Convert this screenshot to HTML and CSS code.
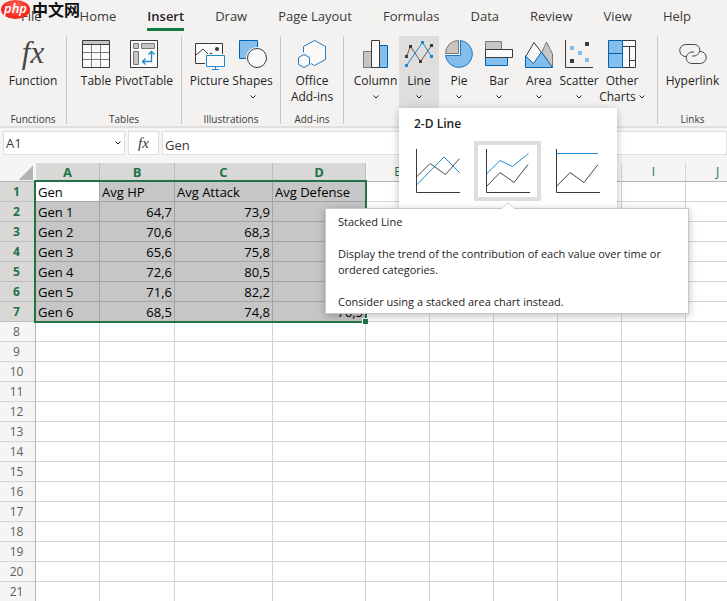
FILE: index.html
```
<!DOCTYPE html>
<html lang="en">
<head>
    <meta charset="UTF-8">
    <meta name="viewport" content="width=device-width, initial-scale=1.0">
    <title>Gen stats</title>
    <link rel="stylesheet" href="styles.css">
</head>
<body>
    <nav class="tabs">
        <a href="#file" class="file">File</a>
        <a href="#home">Home</a>
        <a href="#insert" class="active">Insert</a>
        <a href="#draw">Draw</a>
        <a href="#layout">Page Layout</a>
        <a href="#formulas">Formulas</a>
        <a href="#data">Data</a>
        <a href="#review">Review</a>
        <a href="#view">View</a>
        <a href="#help">Help</a>
    </nav>
    <div class="site-logo"><span class="logo-php">php</span><span class="logo-cn" lang="zh">中文网</span></div>

    <div class="ribbon">
        <section class="group group-functions">
            <div class="tools">
                <button class="tool"><span class="fx-big">fx</span>Function</button>
            </div>
            <div class="group-name">Functions</div>
        </section>

        <section class="group group-tables">
            <div class="tools">
                <button class="tool">
                    <svg class="icon" viewBox="0 0 28 28"><path d="M.5.5h27v27H.5z" fill="#fafafa"/><path d="M1 1h26v3H1z" fill="#c8c6c4"/><path d="M1 12.5h26M1 19.5h26M9.500 5v22M18.500 5v22" stroke="#797774"/><path d="M.5.5h27v27H.5zM.5 4.500h27" fill="none" stroke="#3b3a39"/></svg>
                    Table
                </button>
                <button class="tool pivot">
                    <svg class="icon" viewBox="0 0 28 28"><path d="M.5.5h27v27H.5z" fill="#fafafa" stroke="#3b3a39"/><path d="M3.500 3.500h5v5h-5zM11.500 3.500h13v5h-13zM3.500 11.500h5v13h-5z" fill="#c8c6c4" stroke="#797774"/><path d="M21.500 12v9.500H13M18.500 14.500l3-3 3 3M15.500 18.500l-3 3 3 3" fill="none" stroke="#1e8bcd" stroke-width="1.300"/></svg>
                    PivotTable
                </button>
            </div>
            <div class="group-name">Tables</div>
        </section>

        <section class="group group-illustrations">
            <div class="tools">
                <button class="tool">
                    <svg class="icon" viewBox="0 0 28 28"><path d="M-.5 3.500h27v20h-27z" fill="#fafafa" stroke="#3b3a39"/><circle cx="21" cy="9" r="2" fill="#3b3a39"/><path d="M0 15l7-6 5 5M11 16l4-3 4 3" fill="none" stroke="#3b3a39"/><path d="M9 14h21v14H9z" fill="#f3f2f1"/><path d="M10.500 15.500h18v11h-18z" fill="#fafafa" stroke="#1e8bcd"/><path d="M19.500 27v2.500M16 29.500h7" stroke="#1e8bcd"/></svg>
                    Picture
                </button>
                <button class="tool">
                    <svg class="icon" viewBox="0 0 28 28"><path d="M.5.5h18v18H.5z" fill="#83beec" stroke="#0063b1"/><circle cx="18" cy="18" r="11" fill="#f3f2f1"/><circle cx="18" cy="18" r="9.500" fill="#fafafa" stroke="#3b3a39"/></svg>
                    Shapes
                    <svg class="chevron" viewBox="0 0 6 4"><path d="M.5.5L3 3 5.500.5"/></svg>
                </button>
            </div>
            <div class="group-name">Illustrations</div>
        </section>

        <section class="group group-addins">
            <div class="tools">
                <button class="tool">
                    <svg class="icon" viewBox="0 0 28 28"><path d="M16.500.5l11 6v13l-11 6-11-6v-13z" fill="#fafafa" stroke="#1f7ac4"/><path d="M6 12l7 4v10l-7 4-7-4V16z" fill="#f3f2f1"/><path d="M6 14.500l5.500 3v7l-5.500 3-5.500-3v-7z" fill="#fafafa" stroke="#1f7ac4"/></svg>
                    <span>Office<br>Add-ins</span>
                </button>
            </div>
            <div class="group-name">Add-ins</div>
        </section>

        <section class="group group-charts">
            <div class="tools">
                <button class="tool column">
                    <svg class="icon" viewBox="0 0 28 28"><path d="M1.500 11.500h8v16h-8z" fill="#c8c6c4" stroke="#797774"/><path d="M17.500 5.500h8v22h-8z" fill="#83beec" stroke="#0063b1"/><path d="M9.500.5h8v27h-8z" fill="#fafafa" stroke="#3b3a39"/></svg>
                    Column
                    <svg class="chevron" viewBox="0 0 6 4"><path d="M.5.5L3 3 5.500.5"/></svg>
                </button>
                <div class="dropdown">
                    <button class="tool open" aria-expanded="true">
                        <svg class="icon" viewBox="0 0 28 28"><path d="M1.500 16.500l4-10 10 15 11-16" fill="none" stroke="#605e5c"/><path d="M1.500 25.500l16-23 9 14" fill="none" stroke="#1e8bcd"/><path d="M0 15h3v3H0zM4 5h3v3H4zM14 20h3v3h-3zM25 4h3v3h-3z" fill="#3b3a39"/><path d="M0 24h3v3H0zM16 1h3v3h-3zM25 15h3v3h-3z" fill="#1e8bcd"/></svg>
                        Line
                        <svg class="chevron" viewBox="0 0 6 4"><path d="M.5.5L3 3 5.500.5"/></svg>
                    </button>
                    <div class="menu">
                        <div class="menu-title">2-D Line</div>
                        <div class="options">
                            <button class="option" aria-label="Line">
                                <svg viewBox="0 0 44 44"><path class="blue" d="M.5 36L28 8l15.500 15.500"/><path class="dark" d="M.5 28L14 14.500l15.500 11 14-16"/><path class="axis" d="M.5 0v43.500H44"/></svg>
                            </button>
                            <button class="option selected" aria-label="Stacked Line" aria-describedby="tip">
                                <svg viewBox="0 0 44 44"><path class="blue" d="M.5 25L14 11.500l12.500 6 16-13"/><path class="dark" d="M.5 37.500l13.500-14 14 10 14-18"/><path class="axis" d="M.5 0v43.500H44"/></svg>
                            </button>
                            <button class="option" aria-label="100% Stacked Line">
                                <svg viewBox="0 0 44 44"><path class="blue" d="M.5 4.500H42"/><path class="dark" d="M.5 37.500l13.500-14 14 10 14-18"/><path class="axis" d="M.5 0v43.500H44"/></svg>
                            </button>
                        </div>
                    </div>
                    <div class="tooltip" id="tip" role="tooltip">
                        <svg class="tip-arrow" viewBox="0 0 14 7"><path d="M0 6.500L7 .5l7 6V7H0z" fill="#fff"/><path d="M0 6.500h1L7 .5l6 6h1" fill="none" stroke="#c8c8c8"/></svg>
                        <p>Stacked Line</p>
                        <p>Display the trend of the contribution of each value over time or ordered categories.</p>
                        <p>Consider using a stacked area chart instead.</p>
                    </div>
                </div>
                <button class="tool">
                    <svg class="icon" viewBox="0 0 28 28"><path d="M15.500.5A13.500 13.500 0 1 1 .5 15.500h15z" fill="#83beec" stroke="#1f7ac4"/><path d="M13.500.5v13H.5A13 13 0 0 1 13.500.5z" fill="#c8c6c4" stroke="#797774"/></svg>
                    Pie
                    <svg class="chevron" viewBox="0 0 6 4"><path d="M.5.5L3 3 5.500.5"/></svg>
                </button>
                <button class="tool">
                    <svg class="icon" viewBox="0 0 28 28"><path d="M.5 1.500h16v8H.5z" fill="#c8c6c4" stroke="#797774"/><path d="M.5 17.500h22v8H.5z" fill="#83beec" stroke="#0063b1"/><path d="M.5 9.500h27v8H.5z" fill="#fafafa" stroke="#3b3a39"/></svg>
                    Bar
                    <svg class="chevron" viewBox="0 0 6 4"><path d="M.5.5L3 3 5.500.5"/></svg>
                </button>
                <button class="tool">
                    <svg class="icon" viewBox="0 0 28 28"><path d="M27.500 27V14l-6-12L14 18z" fill="#c8c6c4" stroke="#797774"/><path d="M.5 17L9 2.500 22 20 8 27z" fill="#fafafa" stroke="#3b3a39"/><path d="M.5 27.500V16l8 7.500L16.500 12l11 15.500z" fill="#83beec" stroke="#0063b1"/></svg>
                    Area
                    <svg class="chevron" viewBox="0 0 6 4"><path d="M.5.5L3 3 5.500.5"/></svg>
                </button>
                <button class="tool">
                    <svg class="icon" viewBox="0 0 28 28"><path d="M.5 0v27.500H28" fill="none" stroke="#3b3a39"/><path d="M20 2h4v4h-4zM5 19h4v4H5z" fill="#3b3a39"/><path d="M5 6h4v4H5zM13 11h4v4h-4zM20 18h4v4h-4z" fill="#83beec"/></svg>
                    Scatter
                    <svg class="chevron" viewBox="0 0 6 4"><path d="M.5.5L3 3 5.500.5"/></svg>
                </button>
                <button class="tool other">
                    <svg class="icon" viewBox="0 0 28 28"><path d="M14.500.5h13v27h-13zM14.500 6.500h13M21.500 6.500v21M21.500 20.500h6" fill="#fafafa" stroke="#3b3a39"/><path d="M.5.5h14v27H.5zM.5 13.500h14" fill="#83beec" stroke="#0063b1"/></svg>
                    <span>Other<br>Charts <svg class="chevron inline" viewBox="0 0 6 4"><path d="M.5.5L3 3 5.500.5"/></svg></span>
                </button>
            </div>
        </section>

        <section class="group group-links">
            <div class="tools">
                <button class="tool">
                    <svg class="icon" viewBox="0 0 28 28" fill="none" stroke="#494846"><path d="M7 16.500A6 6 0 0 1 6.500 4.500h8.500c5 0 7.500 5 4.500 9-1 1.500-3 2.500-4.500 2.500h-2"/><path d="M21 11.500a6 6 0 0 1 .5 12H13c-5 0-7.500-5-4.500-9 1-1.500 3-2.500 4.500-2.500h2"/></svg>
                    Hyperlink
                </button>
            </div>
            <div class="group-name">Links</div>
        </section>
    </div>

    <div class="formula-bar">
        <div class="name-box">
            <input type="text" value="A1" aria-label="Name box">
            <svg class="chevron" viewBox="0 0 6 4"><path d="M.5.5L3 3 5.500.5"/></svg>
        </div>
        <button class="fx-button">fx</button>
        <input type="text" class="formula" value="Gen" aria-label="Formula">
    </div>

    <div class="sheet">
        <table>
            <colgroup>
                <col class="col-head"><col class="col-a"><col class="col-b"><col class="col-c"><col class="col-d">
                <col class="col-std"><col class="col-std"><col class="col-std"><col class="col-std"><col class="col-std"><col class="col-std">
            </colgroup>
            <thead>
                <tr><th class="corner"></th><th class="on">A</th><th class="on">B</th><th class="on">C</th><th class="on">D</th><th>E</th><th>F</th><th>G</th><th>H</th><th>I</th><th>J</th></tr>
            </thead>
            <tbody>
                <tr class="data"><th>1</th><td class="cursor">Gen</td><td>Avg HP</td><td>Avg Attack</td><td>Avg Defense</td><td></td><td></td><td></td><td></td><td></td><td></td></tr>
                <tr class="data"><th>2</th><td>Gen 1</td><td class="num">64,7</td><td class="num">73,9</td><td></td><td></td><td></td><td></td><td></td><td></td><td></td></tr>
                <tr class="data"><th>3</th><td>Gen 2</td><td class="num">70,6</td><td class="num">68,3</td><td></td><td></td><td></td><td></td><td></td><td></td><td></td></tr>
                <tr class="data"><th>4</th><td>Gen 3</td><td class="num">65,6</td><td class="num">75,8</td><td></td><td></td><td></td><td></td><td></td><td></td><td></td></tr>
                <tr class="data"><th>5</th><td>Gen 4</td><td class="num">72,6</td><td class="num">80,5</td><td></td><td></td><td></td><td></td><td></td><td></td><td></td></tr>
                <tr class="data"><th>6</th><td>Gen 5</td><td class="num">71,6</td><td class="num">82,2</td><td></td><td></td><td></td><td></td><td></td><td></td><td></td></tr>
                <tr class="data"><th>7</th><td>Gen 6</td><td class="num">68,5</td><td class="num">74,8</td><td class="num">76,5</td><td></td><td></td><td></td><td></td><td></td><td></td></tr>
                <tr><th>8</th><td></td><td></td><td></td><td></td><td></td><td></td><td></td><td></td><td></td><td></td></tr>
                <tr><th>9</th><td></td><td></td><td></td><td></td><td></td><td></td><td></td><td></td><td></td><td></td></tr>
                <tr><th>10</th><td></td><td></td><td></td><td></td><td></td><td></td><td></td><td></td><td></td><td></td></tr>
                <tr><th>11</th><td></td><td></td><td></td><td></td><td></td><td></td><td></td><td></td><td></td><td></td></tr>
                <tr><th>12</th><td></td><td></td><td></td><td></td><td></td><td></td><td></td><td></td><td></td><td></td></tr>
                <tr><th>13</th><td></td><td></td><td></td><td></td><td></td><td></td><td></td><td></td><td></td><td></td></tr>
                <tr><th>14</th><td></td><td></td><td></td><td></td><td></td><td></td><td></td><td></td><td></td><td></td></tr>
                <tr><th>15</th><td></td><td></td><td></td><td></td><td></td><td></td><td></td><td></td><td></td><td></td></tr>
                <tr><th>16</th><td></td><td></td><td></td><td></td><td></td><td></td><td></td><td></td><td></td><td></td></tr>
                <tr><th>17</th><td></td><td></td><td></td><td></td><td></td><td></td><td></td><td></td><td></td><td></td></tr>
                <tr><th>18</th><td></td><td></td><td></td><td></td><td></td><td></td><td></td><td></td><td></td><td></td></tr>
                <tr><th>19</th><td></td><td></td><td></td><td></td><td></td><td></td><td></td><td></td><td></td><td></td></tr>
                <tr><th>20</th><td></td><td></td><td></td><td></td><td></td><td></td><td></td><td></td><td></td><td></td></tr>
                <tr><th>21</th><td></td><td></td><td></td><td></td><td></td><td></td><td></td><td></td><td></td><td></td></tr>
            </tbody>
        </table>
        <div class="selection"><span class="handle"></span></div>
    </div>
</body>
</html>
```
FILE: styles.css
```
* {
    box-sizing: border-box;
}
body {
    margin: 0;
    height: 100vh;
    display: flex;
    flex-direction: column;
    overflow: hidden;
    background-color: #f3f2f1;
    color: #252423;
    font-family: "Open Sans", "Noto Sans", sans-serif;
    font-size: 12px;
}
button, input {
    font: inherit;
    color: inherit;
    border: none;
    background: none;
    padding: 0;
    margin: 0;
    border-radius: 0;
}

/* Tabs */
.tabs {
    display: flex;
    gap: 31px;
    height: 36px;
    padding: 2px 0 5px 21px;
    flex: none;
}
.tabs a {
    color: #3b3a39;
    font-size: 13px;
    line-height: 28px;
    text-decoration: none;
    white-space: nowrap;
}
.tabs .file {
    margin-right: 7px;
}
.tabs .active {
    color: #252423;
    font-weight: 600;
    border-bottom: 3px solid #107c41;
    height: 29px;
}
.site-logo {
    position: absolute;
    top: 0;
    left: 1px;
    display: flex;
    align-items: flex-start;
    gap: 2px;
}
.logo-php {
    width: 29px;
    height: 19px;
    border-radius: 50%;
    background: radial-gradient(ellipse at 50% 35%, #ff6a5c, #f5221b 70%);
    color: #fff;
    font-size: 13px;
    font-style: italic;
    font-weight: 600;
    line-height: 16px;
    text-align: center;
}
.logo-cn {
    color: #111;
    font-family: "Noto Sans CJK SC", sans-serif;
    font-size: 16px;
    font-weight: 700;
    line-height: 18px;
}

/* Ribbon */
.ribbon {
    display: flex;
    flex: none;
    height: 92px;
    border-bottom: 2px solid #e1dfdd;
}
.group {
    display: flex;
    flex-direction: column;
    justify-content: space-between;
    height: 88px;
    border-right: 1px solid #c8c6c4;
}
.group-functions { width: 67px; }
.group-tables { width: 115px; }
.group-illustrations { width: 99px; }
.group-addins { width: 63px; }
.group-charts { width: 314px; }
.group-links {
    flex: 1;
    border-right: none;
}
.tools {
    display: flex;
    justify-content: center;
}
.group-illustrations .tools {
    gap: 3px;
}
.group-charts .tools {
    justify-content: flex-start;
    padding-left: 8px;
}
.group-name {
    font-size: 10px;
    line-height: 10px;
    text-align: center;
    color: #3b3a39;
}
.tool {
    display: flex;
    flex-direction: column;
    align-items: center;
    width: 40px;
    height: 72px;
    padding-top: 4px;
    line-height: 16px;
    white-space: nowrap;
}
.tool .icon {
    width: 28px;
    height: 28px;
    margin-bottom: 5px;
    flex: none;
    overflow: visible;
}
.pivot { width: 56px; }
.column { width: 47px; }
.other { width: 46px; }
.open { background-color: #dfdedc; }
.chevron {
    width: 6px;
    height: 4px;
    margin-top: 6px;
    flex: none;
    fill: none;
    stroke: #252423;
    overflow: visible;
}
.chevron.inline {
    margin: 0 0 2px;
}
.fx-big {
    height: 28px;
    margin-bottom: 5px;
    font-family: "Liberation Serif", serif;
    font-size: 31px;
    font-style: italic;
    line-height: 26px;
    color: #494846;
}

/* Line chart menu */
.dropdown {
    position: relative;
}
.menu {
    position: absolute;
    z-index: 2;
    top: 72px;
    left: 0;
    width: 218px;
    padding: 8px 5px;
    background-color: #fff;
    box-shadow: 0 2px 8px rgba(0, 0, 0, 0.25);
}
.menu-title {
    padding-left: 10px;
    margin-bottom: 9px;
    font-weight: 600;
    line-height: 16px;
}
.options {
    display: flex;
    gap: 3px;
}
.option {
    width: 67px;
    height: 60px;
    display: flex;
    align-items: center;
    justify-content: center;
    border: 4px solid transparent;
}
.option.selected {
    border-color: #dfdedc;
}
.option svg {
    width: 44px;
    height: 44px;
    fill: none;
}
.blue { stroke: #1e8bcd; }
.dark { stroke: #494846; }
.axis { stroke: #3b3a39; }
.tooltip {
    position: absolute;
    z-index: 3;
    top: 172px;
    left: -74px;
    width: 364px;
    padding: 5px 12px 3px;
    background-color: #fff;
    border: 1px solid #c8c8c8;
    box-shadow: 0 2px 8px rgba(0, 0, 0, 0.25);
    font-size: 11px;
    line-height: 16px;
    color: #252423;
}
.tooltip p {
    margin: 0;
}
.tooltip p + p {
    margin-top: 16px;
}
.tip-arrow {
    position: absolute;
    top: -7px;
    left: 175px;
    width: 14px;
    height: 7px;
}

/* Formula bar */
.formula-bar {
    display: flex;
    gap: 3px;
    height: 35px;
    padding: 3px 0 8px 3px;
    flex: none;
    background-color: #f5f5f5;
    font-size: 13px;
    color: #3b3a39;
}
.name-box, .fx-button, .formula {
    background-color: #fff;
    border: 1px solid #e1dfdd;
}
.name-box {
    display: flex;
    align-items: center;
    width: 122px;
    padding: 0 3px 0 2px;
}
.name-box input {
    flex: 1;
    min-width: 0;
}
.name-box .chevron {
    margin: 0;
}
.fx-button {
    width: 31px;
    font-family: "Liberation Serif", serif;
    font-size: 15px;
    font-style: italic;
}
.formula {
    flex: 1;
    min-width: 0;
    padding: 3px 2px 0;
}

/* Grid */
.sheet {
    position: relative;
    flex: 1;
    overflow: hidden;
    background-color: #fff;
}
table {
    width: 750px;
    table-layout: fixed;
    border-collapse: separate;
    border-spacing: 0;
    font-size: 13px;
    color: #000;
}
.col-head { width: 36px; }
.col-a, .col-std { width: 64px; }
.col-b { width: 75px; }
.col-c { width: 98px; }
.col-d { width: 93px; }
th, td {
    height: 20px;
    padding: 0 2px;
    line-height: 18px;
    border-right: 1px solid #d4d4d4;
    border-bottom: 1px solid #d4d4d4;
    white-space: nowrap;
    text-align: left;
}
th {
    background-color: #f5f5f5;
    color: #605e5c;
    font-size: 12px;
    font-weight: 400;
    text-align: center;
}
thead th {
    height: 19px;
    line-height: 16px;
    color: #217346;
    border-bottom-color: #b4b4b4;
}
tbody th {
    padding-right: 4px;
    border-right-color: #b4b4b4;
}
.corner {
    background: linear-gradient(135deg, transparent 50%, #b4b4b4 50%) right 2px bottom 1px / 15px 15px no-repeat #f5f5f5;
    border-right-color: #f5f5f5;
}
.on, .data th {
    background-color: #d9d8d6;
    color: #217346;
    font-size: 13px;
    font-weight: 700;
    border-right-color: #bdbdbd;
}
.data th {
    font-size: 12px;
    border-bottom-color: #bdbdbd;
}
.data td:nth-child(-n+5) {
    background-color: #c6c6c6;
    border-color: #a3a3a3;
}
.data td.cursor {
    background-color: #fff;
}
.data td.num {
    text-align: right;
}
.selection {
    position: absolute;
    top: 17px;
    left: 34px;
    width: 333px;
    height: 143px;
    border: 2px solid #217346;
    pointer-events: none;
}
.handle {
    position: absolute;
    right: -3px;
    bottom: -3px;
    width: 6px;
    height: 6px;
    background-color: #217346;
    border: 1px solid #fff;
    border-right: none;
    border-bottom: none;
}
```
